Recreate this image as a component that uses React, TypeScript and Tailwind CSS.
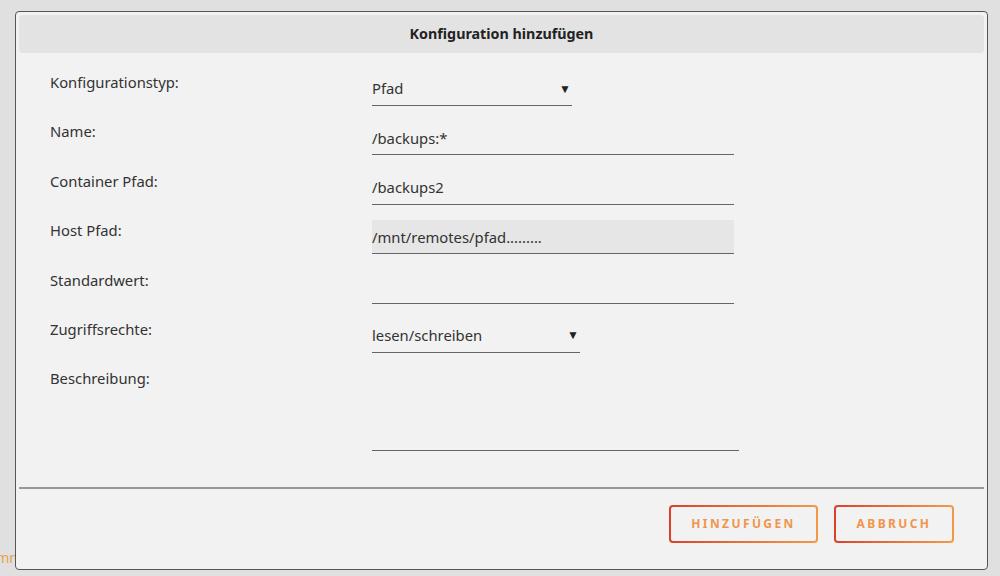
import React from 'react';

type Row = {
  label: string;
  kind: 'select' | 'input' | 'textarea';
  value?: string;
  width: string;
  disabled?: boolean;
};

const rows: Row[] = [
  { label: 'Konfigurationstyp:', kind: 'select', value: 'Pfad', width: 'w-[200px]' },
  { label: 'Name:', kind: 'input', value: '/backups:*', width: 'w-[362px]' },
  { label: 'Container Pfad:', kind: 'input', value: '/backups2', width: 'w-[362px]' },
  { label: 'Host Pfad:', kind: 'input', value: '/mnt/remotes/pfad.........', width: 'w-[362px]', disabled: true },
  { label: 'Standardwert:', kind: 'input', value: '', width: 'w-[362px]' },
  { label: 'Zugriffsrechte:', kind: 'select', value: 'lesen/schreiben', width: 'w-[208px]' },
];

function Field({ row }: { row: Row }) {
  if (row.kind === 'select') {
    return (
      <div className={`${row.width} h-[34px] flex items-center justify-between border-b border-[#666] pr-[1px]`}>
        <span>{row.value}</span>
        <span className="text-[12px] text-[#222]">▼</span>
      </div>
    );
  }
  return (
    <div
      className={`${row.width} h-[34px] flex items-center border-b border-[#666] ${
        row.disabled ? 'bg-[#e6e6e6]' : ''
      }`}
    >
      <span>{row.value}</span>
    </div>
  );
}

export default function App() {
  return (
    <div
      className="relative w-full h-[576px] bg-[#e0e0e0] overflow-hidden pt-[11px] pl-[15px] text-[14.8px] text-[#333]"
      style={{ fontFamily: '"Noto Sans", "Open Sans", sans-serif' }}
    >
      {/* Text behind the dialog */}
      <span className="absolute left-[-9px] top-[547px] text-[#e8a050] text-[14px]">/mnt</span>

      <div className="relative z-10 w-[973px] h-[559px] bg-[#f2f2f2] border border-[#555] rounded-[4px] p-[3px] flex flex-col">
        {/* Title */}
        <div className="h-[38px] shrink-0 bg-[#e3e3e3] rounded-[4px] flex items-center justify-center font-bold text-[14.3px] text-[#222]">
          Konfiguration hinzufügen
        </div>

        {/* Form */}
        <div className="flex-1 pt-[19px] pl-[31px]">
          {rows.map((row) => (
            <div key={row.label} className="flex h-[49.4px]">
              <div className="w-[322px] leading-[20px]">{row.label}</div>
              <Field row={row} />
            </div>
          ))}
          <div className="flex">
            <div className="w-[322px] leading-[20px]">Beschreibung:</div>
            <div className="w-[367px] h-[83px] border-b border-[#666]" />
          </div>
        </div>

        {/* Footer */}
        <div className="h-[2px] bg-[#999] shrink-0" />
        <div className="h-[77px] shrink-0 flex justify-end gap-[16px] pt-[16px] pr-[30px]">
          {['HINZUFÜGEN', 'ABBRUCH'].map((t, i) => (
            <div
              key={t}
              className={`${i === 0 ? 'w-[149px]' : 'w-[120px]'} h-[38px] p-[2px] rounded-[4px] bg-gradient-to-r from-[#d9402c] to-[#f39a45]`}
            >
              <div className="w-full h-full bg-[#f2f2f2] rounded-[2px] flex items-center justify-center">
                <span className="text-[12px] font-bold tracking-[2.4px] text-[#f0954c]">{t}</span>
              </div>
            </div>
          ))}
        </div>
      </div>
    </div>
  );
}
